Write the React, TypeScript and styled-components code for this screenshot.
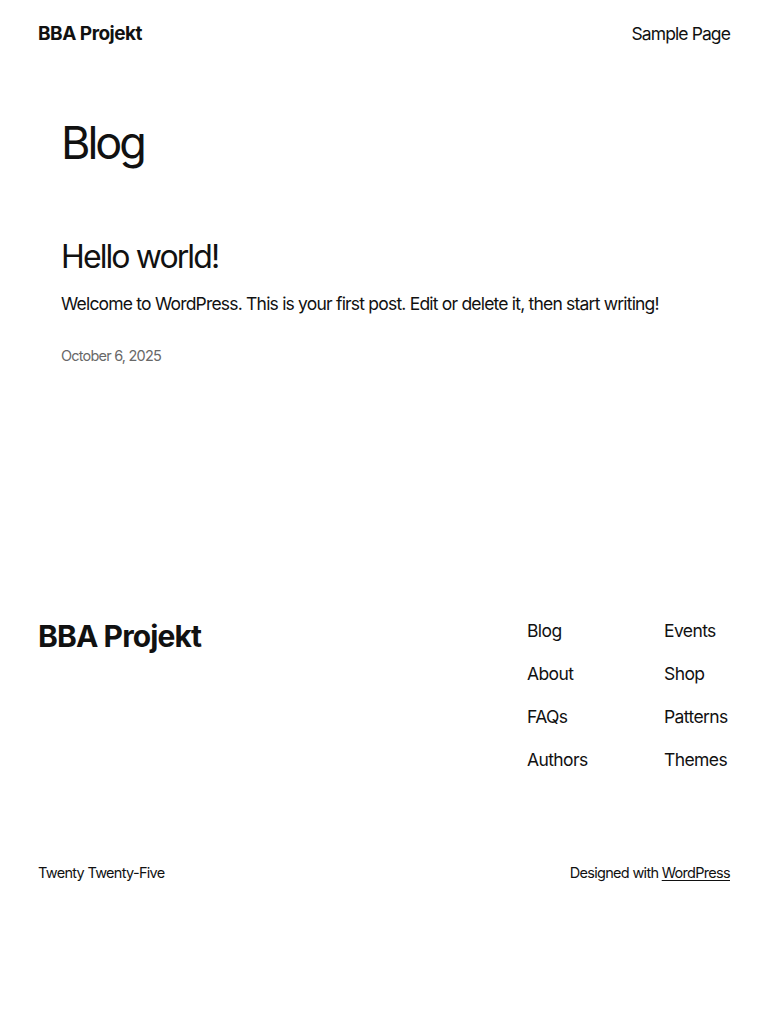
import React from 'react';
import styled, { createGlobalStyle } from 'styled-components';

const GlobalStyle = createGlobalStyle`
  html, body {
    margin: 0;
    padding: 0;
    background: #ffffff;
  }
  body {
    font-family: Inter, "Noto Sans", "Liberation Sans", sans-serif;
    color: #111111;
    -webkit-font-smoothing: antialiased;
  }
`;

const footer_cols: string[][] = [
  ['Blog', 'About', 'FAQs', 'Authors'],
  ['Events', 'Shop', 'Patterns', 'Themes'],
];

const Page = styled.div`
  width: 768px;
  min-height: 1024px;
  display: flex;
  flex-direction: column;
`;

const Header = styled.header`
  display: flex;
  justify-content: space-between;
  align-items: center;
  height: 67px;
  padding: 0 38px;
`;

const SiteTitle = styled.a<{ $big?: boolean }>`
  font-weight: 700;
  font-size: ${p => (p.$big ? '30px' : '19px')};
  letter-spacing: ${p => (p.$big ? '-0.9px' : '-0.5px')};
  margin-top: ${p => (p.$big ? '4px' : '0')};
  color: #111111;
  text-decoration: none;
  line-height: 1;
`;

const NavLink = styled.a`
  font-size: 17.5px;
  letter-spacing: -0.9px;
  color: #111111;
  text-decoration: none;
`;

const Main = styled.main`
  padding: 51px 61px 0;
  height: 550px;
  box-sizing: border-box;
`;

const PageTitle = styled.h1`
  margin: 0;
  font-size: 45px;
  font-weight: 400;
  letter-spacing: -3px;
  line-height: 1.1;
`;

const Post = styled.article`
  margin-top: 70px;
`;

const PostTitle = styled.h2`
  margin: 0;
  font-size: 32px;
  font-weight: 400;
  letter-spacing: -1.9px;
  line-height: 1.2;
`;

const Excerpt = styled.p`
  margin: 15px 0 0;
  font-size: 17.5px;
  letter-spacing: -0.8px;
  line-height: 1.5;
`;

const PostDate = styled.div`
  margin-top: 30px;
  font-size: 14.5px;
  letter-spacing: -0.8px;
  color: #686868;
`;

const Footer = styled.footer`
  padding: 0 38px;
  display: flex;
  flex-direction: column;
`;

const FooterTop = styled.div`
  display: flex;
  justify-content: space-between;
  align-items: flex-start;
`;

const FooterNav = styled.nav`
  display: flex;
`;

const FooterCol = styled.ul<{ $w: number }>`
  list-style: none;
  margin: 0;
  padding: 0;
  width: ${p => p.$w}px;
  display: flex;
  flex-direction: column;
  gap: 16px;
`;

const FooterItem = styled.li`
  font-size: 17.5px;
  letter-spacing: -0.6px;
  line-height: 27px;
`;

const FooterBottom = styled.div`
  margin-top: 91px;
  display: flex;
  justify-content: space-between;
  font-size: 14.5px;
  letter-spacing: -0.7px;
`;

const Credit = styled.span`
  a {
    color: #111111;
    text-decoration: underline;
    text-underline-offset: 2px;
  }
`;

export default function App() {
  return (
    <Page>
      <GlobalStyle />
      <Header>
        <SiteTitle href="#">BBA Projekt</SiteTitle>
        <NavLink href="#">Sample Page</NavLink>
      </Header>
      <Main>
        <PageTitle>Blog</PageTitle>
        <Post>
          <PostTitle>Hello world!</PostTitle>
          <Excerpt>Welcome to WordPress. This is your first post. Edit or delete it, then start writing!</Excerpt>
          <PostDate>October 6, 2025</PostDate>
        </Post>
      </Main>
      <Footer>
        <FooterTop>
          <SiteTitle href="#" $big>BBA Projekt</SiteTitle>
          <FooterNav>
            {footer_cols.map((col, i) => (
              <FooterCol key={i} $w={i === 0 ? 137 : 66}>
                {col.map(item => (
                  <FooterItem key={item}>{item}</FooterItem>
                ))}
              </FooterCol>
            ))}
          </FooterNav>
        </FooterTop>
        <FooterBottom>
          <span>Twenty Twenty-Five</span>
          <Credit>Designed with <a href="#">WordPress</a></Credit>
        </FooterBottom>
      </Footer>
    </Page>
  );
}
